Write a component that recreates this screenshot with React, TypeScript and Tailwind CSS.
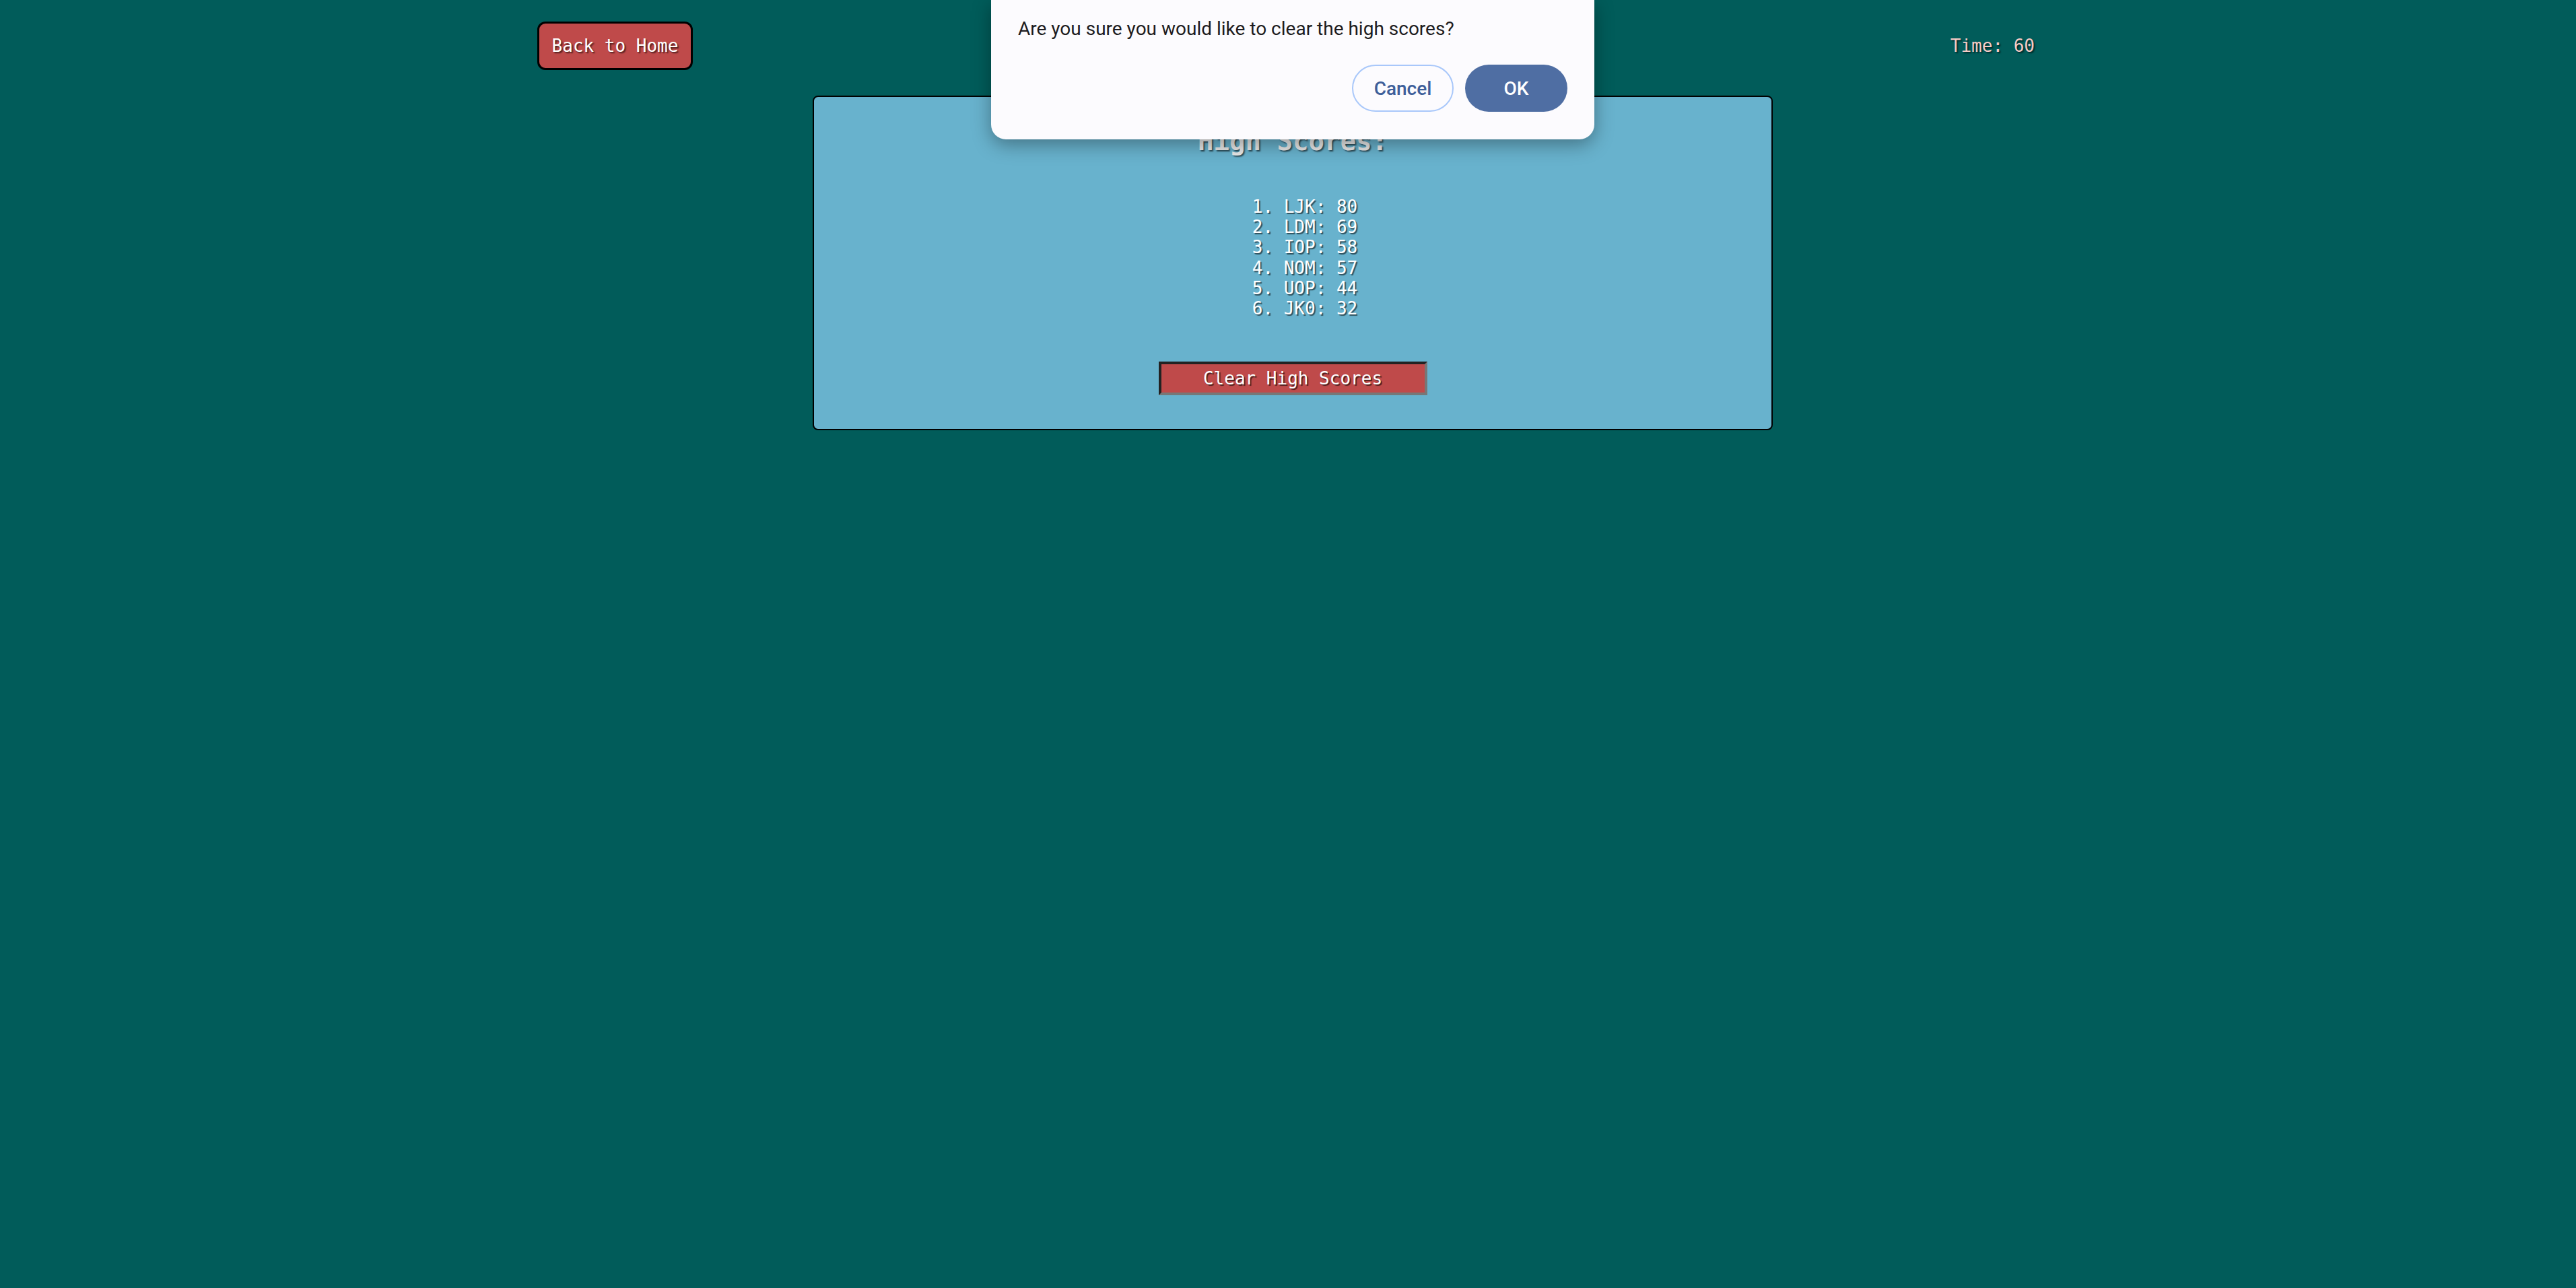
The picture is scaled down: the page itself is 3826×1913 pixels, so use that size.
import React from 'react'

const scores = [
  { name: 'LJK', score: 80 },
  { name: 'LDM', score: 69 },
  { name: 'IOP', score: 58 },
  { name: 'NOM', score: 57 },
  { name: 'UOP', score: 44 },
  { name: 'JK0', score: 32 },
]

const mono = "font-['DejaVu_Sans_Mono',monospace]"

// Browser confirm() dialog laid over the page
const ConfirmDialog = () => (
  <div className="absolute top-0 left-[1472px] w-[896px] h-[207px] bg-[#fcfbfe] rounded-b-[22px] shadow-[0_8px_28px_rgba(0,0,0,0.35)] flex flex-col px-[40px] font-['Roboto',sans-serif]">
    <p className="mt-[23px] leading-[40px] text-[28px] text-[#1d1b20] whitespace-nowrap">
      Are you sure you would like to clear the high scores?
    </p>
    <div className="mt-[33px] flex justify-end gap-[17px]">
      <button className="w-[151px] h-[70px] rounded-full border-2 border-[#a8c7fa] bg-transparent text-[28px] font-medium text-[#3e5f9a]">
        Cancel
      </button>
      <button className="w-[152px] h-[70px] rounded-full bg-[#4f6ea3] text-[28px] font-medium text-white">
        OK
      </button>
    </div>
  </div>
)

export default function App() {
  return (
    <div className={`relative min-h-screen w-full bg-[#015c5a] leading-[normal] ${mono}`}>
      {/* top bar */}
      <div className="w-[2230px] mx-auto pt-[32px] flex items-center justify-between">
        <button className="w-[231px] h-[72px] rounded-[12px] border-[3px] border-black bg-[#bf4a4a] text-[26px] text-white [text-shadow:2px_2px_2px_rgba(0,0,0,0.6)]">
          Back to Home
        </button>
        <span className="pr-[6px] text-[26px] text-[#f7cbc6] [text-shadow:2px_2px_2px_rgba(0,0,0,0.55)]">Time: 60</span>
      </div>

      {/* high score panel */}
      <div className="flex justify-center pl-[14px] mt-[38px]">
        <div className="w-[1426px] h-[497px] border-2 border-black rounded-[8px] bg-[#68b2cd] flex flex-col items-center pt-[43px]">
          <h2 className="text-[39px] font-bold text-[#e9e9e9] [text-shadow:2px_2px_2px_rgba(0,0,0,0.55)]">High Scores:</h2>
          <ol className="mt-[60px] w-full pl-[36px] text-center text-[26px] leading-[30.2px] text-white [text-shadow:2px_2px_1px_rgba(0,0,0,0.55)]">
            {scores.map((s, i) => (
              <li key={s.name}>{i + 1}. {s.name}: {s.score}</li>
            ))}
          </ol>
          <button className="mt-[64px] w-[399px] h-[50px] border-4 border-t-[#222] border-l-[#222] border-b-[#777] border-r-[#777] bg-[#bf4a4a] text-[26px] text-white [text-shadow:2px_2px_1px_rgba(0,0,0,0.6)]">
            Clear High Scores
          </button>
        </div>
      </div>

      <ConfirmDialog />
    </div>
  )
}
